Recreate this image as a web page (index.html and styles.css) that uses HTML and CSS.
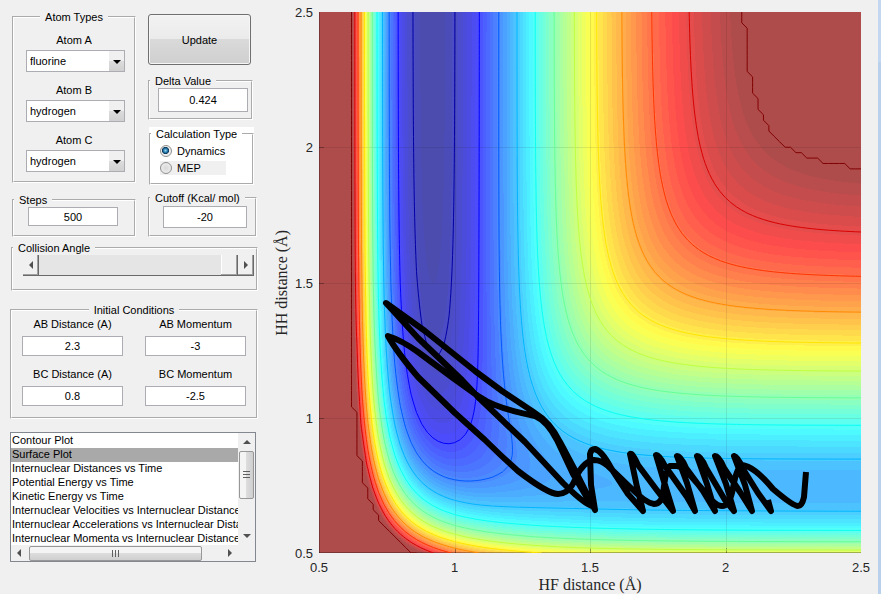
FILE: index.html
```html
<!DOCTYPE html>
<html lang="en">
  <head>
    <meta charset="UTF-8" />
    <meta name="viewport" content="width=device-width, initial-scale=1.0" />
    <title>LEPS GUI</title>
    <link rel="stylesheet" href="styles.css">
  </head>
  <body>
    <form class="sidebar">
      <div class="columns">
        <div class="column">
          <fieldset class="group atoms">
            <legend>Atom Types</legend>
            <label for="atom-a">Atom A</label>
            <div class="popup">
              <select id="atom-a"><option>fluorine</option><option>hydrogen</option></select>
              <span class="arrow"></span>
            </div>
            <label for="atom-b">Atom B</label>
            <div class="popup">
              <select id="atom-b"><option>hydrogen</option><option>fluorine</option></select>
              <span class="arrow"></span>
            </div>
            <label for="atom-c">Atom C</label>
            <div class="popup">
              <select id="atom-c"><option>hydrogen</option><option>fluorine</option></select>
              <span class="arrow"></span>
            </div>
          </fieldset>
          <fieldset class="group steps">
            <legend><label for="steps">Steps</label></legend>
            <input type="text" id="steps" value="500" />
          </fieldset>
        </div>

        <div class="column wide">
          <button type="button" class="update">Update</button>
          <fieldset class="group delta">
            <legend><label for="delta">Delta Value</label></legend>
            <input type="text" id="delta" value="0.424" />
          </fieldset>
          <div class="white">
            <fieldset class="group calc">
              <legend>Calculation Type</legend>
              <label class="choice"><input type="radio" name="calc" checked />Dynamics</label>
              <label class="choice plain"><input type="radio" name="calc" />MEP</label>
            </fieldset>
          </div>
          <fieldset class="group cutoff">
            <legend><label for="cutoff">Cutoff (Kcal/ mol)</label></legend>
            <input type="text" id="cutoff" value="-20" />
          </fieldset>
        </div>
      </div>

      <fieldset class="group angle">
        <legend><label for="angle">Collision Angle</label></legend>
        <div class="slider">
          <button type="button" class="step" aria-label="Decrease"><span class="tri left"></span></button>
          <input type="range" id="angle" min="0" max="180" value="180" />
          <button type="button" class="step" aria-label="Increase"><span class="tri right"></span></button>
        </div>
      </fieldset>

      <fieldset class="group initial">
        <legend>Initial Conditions</legend>
        <div class="conditions">
          <div class="field">
            <label for="ab-dist">AB Distance (A)</label>
            <input type="text" id="ab-dist" value="2.3" />
          </div>
          <div class="field">
            <label for="ab-mom">AB Momentum</label>
            <input type="text" id="ab-mom" value="-3" />
          </div>
          <div class="field">
            <label for="bc-dist">BC Distance (A)</label>
            <input type="text" id="bc-dist" value="0.8" />
          </div>
          <div class="field">
            <label for="bc-mom">BC Momentum</label>
            <input type="text" id="bc-mom" value="-2.5" />
          </div>
        </div>
      </fieldset>

      <div class="listbox">
        <select size="8" aria-label="Plot type">
          <option>Contour Plot</option>
          <option selected>Surface Plot</option>
          <option>Internuclear Distances vs Time</option>
          <option>Potential Energy vs Time</option>
          <option>Kinetic Energy vs Time</option>
          <option>Internuclear Velocities vs Internuclear Distance</option>
          <option>Internuclear Accelerations vs Internuclear Distance</option>
          <option>Internuclear Momenta vs Internuclear Distance</option>
        </select>
        <div class="vbar">
          <span class="tri up"></span>
          <span class="thumb"><i></i><i></i><i></i></span>
          <span class="track"></span>
          <span class="tri down"></span>
        </div>
        <div class="hbar">
          <span class="tri left"></span>
          <span class="thumb"><i></i><i></i><i></i></span>
          <span class="track"></span>
          <span class="tri right"></span>
        </div>
      </div>
    </form>

    <main class="figure">
      <div class="ylabel">HH distance (Å)</div>
      <div class="yticks">
        <span>2.5</span><span>2</span><span>1.5</span><span>1</span><span>0.5</span>
      </div>
      <div class="plot">
        <canvas id="surface"></canvas>
        <svg class="path" viewBox="319 12 542 541" preserveAspectRatio="none">
          <path d="M806 472 L804 497 Q802 506 798 506 Q793 506 773 489 Q754 466 742 465 Q737 466 733 488 Q730 506 722 506 Q715 506 703 490 L690 475 Q683 467 677 466 L670 466 Q666 468 663 494 Q661 504 654 504 Q646 503 632 489 L608 466 Q601 460 594 460 Q584 461 576 477 Q570 494 558 494 Q548 494 518 471 Q500 455 485 440 L455 413 L418 377 Q396 351 388 336 Q401 340 418 352 L453 378 L478 396 Q487 402 495 405 Q510 411 535 416 Q547 421 557 440 L573 474 L592 506 Q584 504 563 483 L525 442 L478 397 L462 380 L418 338 L386 303 L425 331 L475 371 L502 391 L535 413 Q550 422 560 442 L577 474 L595 510 L591 485 L590 454 Q591 449 595 449 Q602 451 611 468 L628 494 L643 511 L637 487 L630 454 Q632 452 638 465 L656 489 L673 511 L665 485 L656 455 Q659 454 665 466 L687 497 L695 511 L687 483 L677 456 Q681 456 686 468 L703 491 L715 511 L707 484 L697 456 Q701 456 706 468 L725 500 L734 511 L726 484 L715 456 Q719 456 724 468 L740 492 L752 511 L745 485 L734 456 Q738 457 743 469 L758 493 L771 511 L768 500" />
        </svg>
      </div>
      <div class="xticks">
        <span>0.5</span><span>1</span><span>1.5</span><span>2</span><span>2.5</span>
      </div>
      <div class="xlabel">HF distance (Å)</div>
    </main>
    <div class="edge"></div>
    <script src="surface.js"></script>
  </body>
</html>
```
FILE: styles.css
```css
* {
  margin: 0;
  padding: 0;
  box-sizing: border-box;
}
body {
  display: flex;
  min-height: 100vh;
  background: #f0f0f0;
  color: #000;
  font: 11px/14px "Liberation Sans", Arial, sans-serif;
}
input,
select,
button {
  font: inherit;
  color: inherit;
}

/* left hand controls */
.sidebar {
  flex: none;
  width: 260px;
  padding: 10px 2px 0 10px;
}
.columns {
  display: flex;
  gap: 12px;
  padding-left: 2px;
}
.column {
  width: 124px;
}
.column.wide {
  width: 110px;
  padding-top: 4px;
}
.group {
  min-width: 0;
  border: 2px groove #fff;
}
.group legend {
  padding: 0 5px;
  white-space: nowrap;
}
.group input[type="text"] {
  display: block;
  border: 1px solid #abadb3;
  background: #fff;
  text-align: center;
}
.atoms {
  height: 173px;
  padding-top: 9px;
  text-align: center;
}
.atoms legend {
  margin: 0 auto;
}
.atoms > label {
  display: block;
}
.popup {
  position: relative;
  width: 99px;
  height: 22px;
  margin: 3px 0 11px 12px;
}
.popup select {
  width: 100%;
  height: 100%;
  padding-left: 3px;
  border: 1px solid #abadb3;
  border-radius: 0;
  background: #fff;
  appearance: none;
}
.arrow {
  position: absolute;
  top: 1px;
  right: 1px;
  width: 15px;
  height: 20px;
  background: linear-gradient(#f0f0f0 50%, #dcdcdc 50%, #d0d0d0);
  pointer-events: none;
}
.arrow::after {
  content: "";
  position: absolute;
  top: 9px;
  left: 4px;
  border: 4px solid transparent;
  border-top-color: #000;
  border-bottom: 0;
}
.steps {
  height: 44px;
  margin-top: 10px;
}
.steps input {
  width: 90px;
  height: 19px;
  margin-left: 14px;
}
.update {
  display: block;
  width: 103px;
  height: 51px;
  border: 1px solid #707070;
  border-radius: 3px;
  background: linear-gradient(#f2f2f2, #ebebeb 48%, #dadada 48%, #cfcfcf);
  box-shadow: inset 0 0 0 1px #f6f6f6;
}
.delta {
  width: 105px;
  height: 46px;
  margin-top: 9px;
}
.delta input {
  width: 90px;
  height: 24px;
  margin-left: 8px;
}
.white {
  width: 105px;
  margin: 7px 0 0 1px;
  background: #fff;
}
.calc {
  height: 58px;
}
.choice {
  display: flex;
  align-items: center;
  gap: 5px;
  width: 66px;
  height: 14px;
  margin: 3px 0 0 9px;
}
.choice.plain {
  background: #f0f0f0;
}
.choice input {
  width: 12px;
  height: 12px;
  border: 1px solid #8e8f8f;
  border-radius: 50%;
  background: radial-gradient(#d8d8d8, #f4f4f4);
  appearance: none;
}
.choice input:checked {
  background: radial-gradient(circle at 45% 45%, #8fd6f5, #1b6a9c 30%, #0b3554 42%, #eee 50%);
}
.cutoff {
  width: 109px;
  height: 46px;
  margin-top: 6px;
}
.cutoff input {
  width: 84px;
  height: 22px;
  margin: 1px 0 0 13px;
}
.angle {
  height: 50px;
  margin: 4px 0 0 1px;
}
.slider {
  display: flex;
  width: 231px;
  height: 21px;
  margin-left: 10px;
  border-bottom: 1px solid #696969;
}
.step {
  display: flex;
  align-items: center;
  justify-content: center;
  width: 16px;
  border: 0;
  border-right: 1px solid #696969;
  background: #f0f0f0;
  box-shadow: inset -1px -1px #a0a0a0;
}
.slider input {
  flex: 1;
  min-width: 0;
  height: 20px;
  background: #e5e5e5;
  appearance: none;
}
.slider input::-webkit-slider-thumb {
  width: 17px;
  height: 20px;
  border-right: 1px solid #696969;
  background: #f0f0f0;
  box-shadow: inset -1px -1px #a0a0a0, inset 1px 0 #fff;
  appearance: none;
}
.tri {
  flex: none;
  border: 4px solid transparent;
}
.tri.left {
  border-left: 0;
  border-right-color: #505050;
}
.tri.right {
  border-right: 0;
  border-left-color: #505050;
}
.tri.up {
  border-top: 0;
  border-bottom-color: #505050;
}
.tri.down {
  border-bottom: 0;
  border-top-color: #505050;
}
.initial {
  height: 116px;
  margin-top: 12px;
}
.initial legend {
  margin: 0 auto;
}
.conditions {
  display: grid;
  grid-template-columns: 101px 101px;
  gap: 11px 22px;
  padding-left: 10px;
}
.field label {
  display: block;
  margin-bottom: 5px;
  text-align: center;
}
.group .field input {
  width: 101px;
  height: 20px;
}

/* plot list with its own scroll bars */
.listbox {
  display: grid;
  grid-template: 112px 16px / 1fr 17px;
  width: 246px;
  margin-top: 13px;
  border: 1px solid #828790;
  background: #f0f0f0;
}
.listbox select {
  width: 100%;
  height: 112px;
  padding-top: 1px;
  border: 0;
  border-radius: 0;
  background: #fff;
  overflow: hidden;
}
.listbox option {
  min-height: 14px;
  padding: 0 1px;
  line-height: 14px;
}
.listbox option:checked {
  background: linear-gradient(#a9a9a9, #a9a9a9);
  color: #000;
}
.vbar,
.hbar {
  display: flex;
  align-items: center;
}
.vbar {
  flex-direction: column;
  padding: 7px 0;
}
.hbar {
  grid-column: 1 / 3;
  padding: 0 23px 0 6px;
}
.track {
  flex: 1;
}
.thumb {
  display: flex;
  align-items: center;
  justify-content: center;
  gap: 1px;
  border: 1px solid #979797;
  border-radius: 2px;
}
.vbar .thumb {
  flex-direction: column;
  width: 15px;
  height: 48px;
  margin-top: 7px;
  background: linear-gradient(90deg, #f4f4f4 50%, #dcdcdc 50%, #cfcfcf);
}
.hbar .thumb {
  width: 173px;
  height: 15px;
  margin-left: 8px;
  background: linear-gradient(#f4f4f4 50%, #dcdcdc 50%, #cfcfcf);
}
.thumb i {
  background: #606060;
}
.vbar i {
  width: 7px;
  height: 1px;
  margin-bottom: 1px;
}
.hbar i {
  width: 1px;
  height: 7px;
  margin-right: 1px;
}

/* figure */
.figure {
  flex: 1;
  display: grid;
  grid-template: 12px 1fr 23px 18px / 31px 28px 1fr;
  padding-right: 17px;
  color: #262626;
  font-size: 13px;
}
.ylabel {
  grid-area: 2 / 1;
  align-self: center;
  justify-self: end;
  writing-mode: vertical-rl;
  transform: rotate(180deg);
  font: 16px/18px "Liberation Serif", serif;
}
.yticks {
  grid-area: 2 / 2;
  display: flex;
  flex-direction: column;
  justify-content: space-between;
  margin: -6px 6px -8px 0;
  text-align: right;
}
.plot {
  grid-area: 2 / 3;
  position: relative;
}
.plot canvas,
.path {
  position: absolute;
  width: 100%;
  height: 100%;
}
.path path {
  fill: none;
  stroke: #000;
  stroke-width: 6;
  stroke-linejoin: round;
  stroke-linecap: butt;
}
.xticks {
  grid-area: 3 / 3;
  display: flex;
  justify-content: space-between;
  margin: 8px -15px 0;
}
.xticks span {
  width: 30px;
  text-align: center;
}
.xlabel {
  grid-area: 4 / 3;
  justify-self: center;
  font: 16px/18px "Liberation Serif", serif;
}
.edge {
  width: 3px;
  background: linear-gradient(#c3d8f0 62px, #b9d1ea 62px);
}
```
FILE: surface.js
```js
// LEPS potential for collinear F + H2, energies in kcal/mol, distances in angstrom
const HF = { D: 141.2, b: 2.2187, r: 0.917, s: 0.19 };
const HH = { D: 109.5, b: 1.942, r: 0.7414, s: 0.185 };
const CUTOFF = -22.16;
const BOTTOM = -141.5;
const MIN = 0.5;
const MAX = 2.5;
const STEP = 0.02;

function terms(bond, r) {
  const u = Math.exp(-bond.b * (r - bond.r));
  const k = bond.D / 4 / (1 + bond.s);
  return {
    q: k * ((3 + bond.s) * u * u - (2 + 6 * bond.s) * u),
    j: k * ((1 + 3 * bond.s) * u * u - (6 + 2 * bond.s) * u),
  };
}

function energy(x, y) {
  const a = terms(HF, x);
  const b = terms(HH, y);
  const c = terms(HF, x + y);
  const mix = (a.j - b.j) ** 2 + (b.j - c.j) ** 2 + (c.j - a.j) ** 2;
  return Math.min(a.q + b.q + c.q - Math.sqrt(mix / 2), CUTOFF);
}

// jet colormap, t from 0 to 1
function jet(t) {
  const channel = (c) => Math.max(0, Math.min(1, 1.5 - Math.abs(4 * t - c)));
  return [channel(3), channel(2), channel(1)];
}

function draw() {
  const canvas = document.getElementById("surface");
  const w = (canvas.width = canvas.clientWidth);
  const h = (canvas.height = canvas.clientHeight);
  const ctx = canvas.getContext("2d");
  const toX = (r) => ((r - MIN) / (MAX - MIN)) * w;
  const toY = (r) => h - ((r - MIN) / (MAX - MIN)) * h;

  // filled surface
  const image = ctx.createImageData(w, h);
  for (let j = 0; j < h; j++) {
    for (let i = 0; i < w; i++) {
      const x = MIN + ((i + 0.5) / w) * (MAX - MIN);
      const y = MAX - ((j + 0.5) / h) * (MAX - MIN);
      const band = Math.min(63, Math.floor((64 * (energy(x, y) - BOTTOM)) / (CUTOFF - BOTTOM)));
      const rgb = jet((Math.max(0, band) + 0.75) / 64.5);
      const p = 4 * (j * w + i);
      for (let k = 0; k < 3; k++) {
        image.data[p + k] = 255 * (0.3 + 0.7 * rgb[k]);
      }
      image.data[p + 3] = 255;
    }
  }
  ctx.putImageData(image, 0, 0);

  // grid lines and ticks
  ctx.fillStyle = "rgba(0, 0, 0, 0.09)";
  for (let r = 1; r < MAX; r += 0.5) {
    ctx.fillRect(Math.round(toX(r)), 0, 1, h);
    ctx.fillRect(0, Math.round(toY(r)), w, 1);
  }
  ctx.fillStyle = "rgba(0, 0, 0, 0.3)";
  for (let r = 1; r < MAX; r += 0.5) {
    ctx.fillRect(Math.round(toX(r)), h - 5, 1, 5);
    ctx.fillRect(0, Math.round(toY(r)), 5, 1);
  }
  ctx.fillRect(0, 0, 1, h);
  ctx.fillRect(0, h - 1, w, 1);

  // contour lines, marching squares on the coarse grid
  const n = Math.round((MAX - MIN) / STEP);
  const grid = [];
  for (let j = 0; j <= n; j++) {
    grid.push([]);
    for (let i = 0; i <= n; i++) {
      grid[j].push(energy(MIN + i * STEP, MIN + j * STEP));
    }
  }
  for (let k = 0; k < 12; k++) {
    // the last line runs along the clipped grid points
    const level = k === 11 ? CUTOFF : -137 + 10.44 * k;
    const rgb = jet(k === 11 ? 1 : (level - BOTTOM) / (CUTOFF - BOTTOM)).map((c) => Math.round(c * 255));
    ctx.strokeStyle = `rgb(${rgb})`;
    ctx.lineWidth = 1;
    ctx.beginPath();
    for (let j = 0; j < n; j++) {
      for (let i = 0; i < n; i++) {
        const corners = [[i, j], [i + 1, j], [i + 1, j + 1], [i, j + 1]];
        const hits = [];
        corners.forEach(([x1, y1], c) => {
          const [x2, y2] = corners[(c + 1) % 4];
          const v1 = grid[y1][x1];
          const v2 = grid[y2][x2];
          if (v1 < level !== v2 < level) {
            const t = (level - v1) / (v2 - v1);
            hits.push([x1 + t * (x2 - x1), y1 + t * (y2 - y1)]);
          }
        });
        if (hits.length >= 2) {
          ctx.moveTo(toX(MIN + hits[0][0] * STEP), toY(MIN + hits[0][1] * STEP));
          ctx.lineTo(toX(MIN + hits[1][0] * STEP), toY(MIN + hits[1][1] * STEP));
        }
      }
    }
    ctx.stroke();
  }
}

draw();
window.addEventListener("resize", draw);
```
